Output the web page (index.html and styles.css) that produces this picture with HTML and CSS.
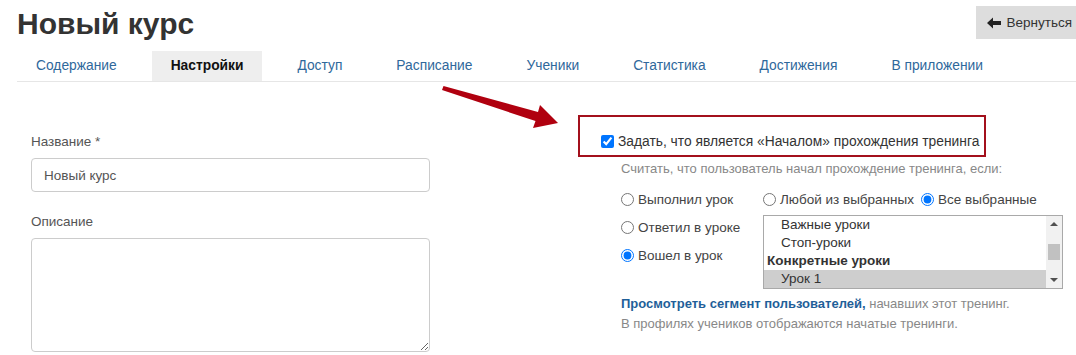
FILE: index.html
```html
<!DOCTYPE html>
<html lang="ru">
<head>
    <meta charset="UTF-8">
    <title>Новый курс</title>
    <link rel="stylesheet" href="styles.css">
</head>
<body>

    <div class="page">
        <div class="header">
            <h1 class="title">Новый курс</h1>
            <button class="back-button">
                <svg class="back-icon" width="15" height="12" viewBox="0 0 15 12"><path d="M0 6 L6 0.5 L6 4 L14 4 L14 8 L6 8 L6 11.5 Z" fill="#222"/></svg>
                Вернуться
            </button>
        </div>

        <ul class="tabs">
            <li class="tab">Содержание</li>
            <li class="tab active">Настройки</li>
            <li class="tab">Доступ</li>
            <li class="tab">Расписание</li>
            <li class="tab">Ученики</li>
            <li class="tab">Статистика</li>
            <li class="tab">Достижения</li>
            <li class="tab">В приложении</li>
        </ul>

        <div class="content">
            <div class="left-col">
                <label class="field-label">Название *</label>
                <input class="text-input" type="text" value="Новый курс">
                <label class="field-label second">Описание</label>
                <textarea class="text-area"></textarea>
            </div>

            <div class="right-col">
                <div class="highlight">
                    <label class="check-label"><input type="checkbox" checked> Задать, что является «Началом» прохождения тренинга</label>
                </div>
                <div class="start-options">
                    <p class="hint">Считать, что пользователь начал прохождение тренинга, если:</p>
                    <div class="options-grid">
                        <div class="options-left">
                            <label class="radio-row"><input type="radio" name="cond"> Выполнил урок</label>
                            <label class="radio-row"><input type="radio" name="cond"> Ответил в уроке</label>
                            <label class="radio-row"><input type="radio" name="cond" checked> Вошел в урок</label>
                        </div>
                        <div class="options-right">
                            <div class="radio-line">
                                <label class="radio-row"><input type="radio" name="mode"> Любой из выбранных</label>
                                <label class="radio-row"><input type="radio" name="mode" checked> Все выбранные</label>
                            </div>
                            <div class="listbox">
                                <div class="list-items">
                                    <div class="list-item">Важные уроки</div>
                                    <div class="list-item">Стоп-уроки</div>
                                    <div class="list-group">Конкретные уроки</div>
                                    <div class="list-item selected">Урок 1</div>
                                </div>
                                <div class="scrollbar">
                                    <span class="scroll-arrow up"></span>
                                    <span class="scroll-thumb"></span>
                                    <span class="scroll-arrow down"></span>
                                </div>
                            </div>
                        </div>
                    </div>
                    <p class="segment"><a class="segment-link" href="#">Просмотреть сегмент пользователей,</a> начавших этот тренинг.<br>В профилях учеников отображаются начатые тренинги.</p>
                </div>
            </div>
        </div>
    </div>

    <!-- стрелка-указатель поверх страницы -->
    <svg class="pointer-arrow" width="130" height="50" viewBox="0 0 130 50">
        <path d="M2 4 L3.5 0 L98 26 L100 19 L118 37 L93 42 L95.5 35 Z" fill="#b0000f"/>
    </svg>

</body>
</html>
```

FILE: styles.css
```css
body {
    margin: 0;
    font-family: "Liberation Sans", Arial, sans-serif;
    color: #333;
    background: #fff;
    overflow: hidden;
}
.page {
    padding-left: 17px;
}
.header {
    display: flex;
    justify-content: space-between;
    align-items: flex-start;
    height: 51px;
}
.title {
    margin: 6px 0 0 0;
    font-size: 30px;
    font-weight: bold;
    color: #333;
    line-height: 36px;
}
.back-button {
    margin-top: 6px;
    height: 33px;
    padding: 0 4px 0 11px;
    border: none;
    background-color: #ddd;
    font-family: "Liberation Sans", Arial, sans-serif;
    font-size: 13.5px;
    color: #333;
    display: flex;
    align-items: center;
    gap: 4px;
}
.tabs {
    list-style: none;
    margin: 0;
    padding: 0;
    display: flex;
    gap: 16px;
    border-bottom: 1px solid #e6e6e6;
    height: 30px;
}
.tab {
    padding: 0 19px;
    font-size: 13.8px;
    line-height: 30px;
    color: #2f689b;
}
.tab.active {
    background-color: #eee;
    color: #111;
    font-weight: bold;
}
.content {
    display: flex;
    padding-left: 14px;
}
.left-col {
    width: 399px;
    padding-top: 52px;
    display: flex;
    flex-direction: column;
}
.field-label {
    font-size: 13.5px;
    color: #555;
    margin-bottom: 9px;
}
.field-label.second {
    margin-top: 22px;
}
.text-input {
    box-sizing: border-box;
    height: 34px;
    border: 1px solid #ccc;
    border-radius: 4px;
    padding: 0 12px;
    font-family: "Liberation Sans", Arial, sans-serif;
    font-size: 13.5px;
    color: #555;
}
.text-area {
    box-sizing: border-box;
    height: 114px;
    border: 1px solid #ccc;
    border-radius: 4px;
}
.right-col {
    margin-left: 148px;
    padding-top: 33px;
}
.highlight {
    box-sizing: border-box;
    width: 408px;
    height: 42px;
    border: 2px solid #a3101c;
    padding: 17px 0 0 21px;
}
.check-label {
    font-size: 13.8px;
    color: #333;
    display: flex;
    align-items: center;
    gap: 4px;
    white-space: nowrap;
}
.check-label input {
    margin: 0;
    width: 13px;
    height: 13px;
}
.start-options {
    padding-left: 43px;
}
.hint {
    margin: 4px 0 14px 0;
    font-size: 13px;
    color: #888;
}
.options-grid {
    display: flex;
}
.options-left {
    width: 142px;
    display: flex;
    flex-direction: column;
    gap: 9px;
}
.radio-row {
    font-size: 13.5px;
    color: #444;
    display: flex;
    align-items: center;
    gap: 4px;
    line-height: 19px;
    white-space: nowrap;
}
.radio-row input {
    margin: 0;
    width: 13px;
    height: 13px;
}
.radio-line {
    display: flex;
    gap: 7px;
    margin-bottom: 6px;
}
.listbox {
    box-sizing: border-box;
    width: 300px;
    height: 74px;
    border: 1px solid #a9a9a9;
    display: flex;
}
.list-items {
    flex: 1;
    padding-top: 0;
}
.list-item {
    font-size: 13.5px;
    color: #333;
    padding-left: 17px;
    line-height: 18px;
}
.list-item.selected {
    background-color: #cecece;
}
.list-group {
    font-size: 13.5px;
    font-weight: bold;
    color: #333;
    padding-left: 3px;
    line-height: 18px;
}
.scrollbar {
    width: 16px;
    background-color: #f1f1f1;
    position: relative;
}
.scroll-arrow {
    position: absolute;
    left: 4px;
    width: 0;
    height: 0;
    border-left: 4px solid transparent;
    border-right: 4px solid transparent;
}
.scroll-arrow.up {
    top: 6px;
    border-bottom: 4px solid #505050;
}
.scroll-arrow.down {
    bottom: 6px;
    border-top: 4px solid #505050;
}
.scroll-thumb {
    position: absolute;
    left: 2px;
    top: 28px;
    width: 12px;
    height: 16px;
    background-color: #c1c1c1;
}
.segment {
    margin: 5px 0 0 0;
    font-size: 13px;
    color: #888;
    line-height: 20px;
}
.segment-link {
    color: #1f5f99;
    font-weight: bold;
    text-decoration: none;
}
.pointer-arrow {
    position: absolute;
    left: 440px;
    top: 86px;
}
```
